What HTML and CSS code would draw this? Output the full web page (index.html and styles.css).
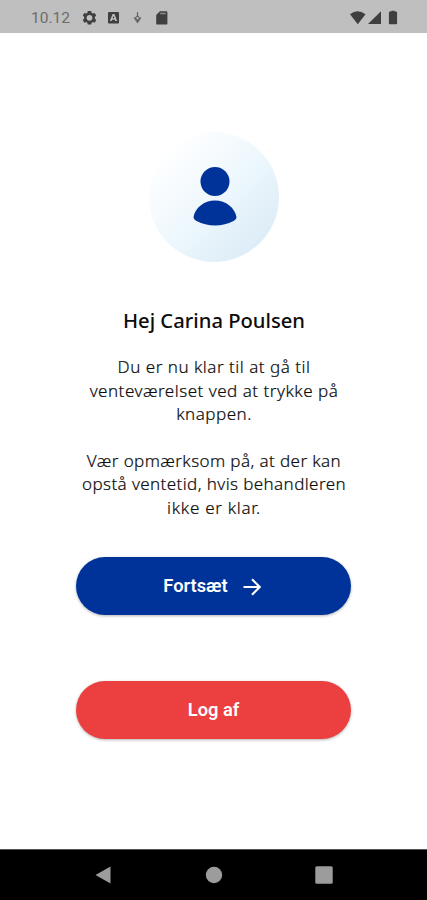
FILE: index.html
```html
<!DOCTYPE html>
<html lang="da">
<head>
<meta charset="utf-8">
<meta name="viewport" content="width=device-width">
<title>Venteværelse</title>
<link rel="stylesheet" href="styles.css">
</head>
<body>
<header class="status">
  <span class="clock">10.12</span>
  <svg class="status-left" width="82" height="18" viewBox="0 0 82 18">
    <path fill-rule="evenodd" d="M5.800 2h3.400l.5 1.900 1 .6 2-.6 1.500 2.700-1.400 1.400v1.600l1.400 1.400-1.500 2.700-2-.6-1 .6-.5 1.900H5.800l-.5-1.900-1-.6-2 .6L.8 11l1.400-1.400V8L.8 6.600l1.500-2.700 2 .6 1-.6zM7.500 5.900a2.900 2.900 0 1 0 0 5.800 2.900 2.900 0 0 0 0-5.800z"/>
    <path fill-rule="evenodd" d="M27 3h9a1 1 0 0 1 1 1v9.500a1 1 0 0 1-1 1h-9a1 1 0 0 1-1-1V4a1 1 0 0 1 1-1zm3.600 2-2.800 7h1.800l.5-1.300h2.800l.5 1.300h1.800l-2.800-7zm.9 1.700.9 2.500h-1.800z"/>
    <path class="thin" d="M55.500 3v4M52 8.500l3.500 5 3.500-5M55.500 6.500l2 2.500-2 2.500-2-2.500z"/>
    <path fill-rule="evenodd" d="M77.900 2.200h6.300a1.200 1.200 0 0 1 1.200 1.200v11a1.200 1.200 0 0 1-1.200 1.200h-8.800a1.200 1.200 0 0 1-1.200-1.200V6z"/>
    <path class="notch" d="M78.200 4.500h5.500"/>
  </svg>
  <svg class="status-right" width="50" height="18" viewBox="0 0 50 18">
    <path d="M1 5.200Q8.500-.6 16.500 5.200L8.800 15.200z"/>
    <path d="M32 2.300v12.800H19z"/>
    <path d="M42.300 2.500V1.700h3.400v.8h1.500a.9.900 0 0 1 .9.900v10.900a.9.900 0 0 1-.9.900h-6.400a.9.900 0 0 1-.9-.9V3.400a.9.900 0 0 1 .9-.9z"/>
  </svg>
</header>
<main class="screen">
  <div class="avatar">
    <svg width="44" height="60" viewBox="0 0 44 60">
      <circle cx="22" cy="14.500" r="14.500"/>
      <path d="M.5 50C2 41 11 33.500 22 33.500S42 41 43.500 50q0 2.500-2.500 3.700Q32 58.500 22 58.500T3 53.700Q.5 52.500.5 50z"/>
    </svg>
  </div>
  <h1 class="title">Hej Carina Poulsen</h1>
  <p class="text">Du er nu klar til at gå til<br>venteværelset ved at trykke på<br>knappen.</p>
  <p class="text tight">Vær opmærksom på, at der kan<br>opstå ventetid, hvis behandleren<br><span class="wide">ikke er klar.</span></p>
  <button class="button primary"><span>Fortsæt</span>
    <svg width="18" height="18" viewBox="0 0 18 18"><path d="M.5 9h16M9 1.300 16.700 9 9 16.700"/></svg>
  </button>
  <button class="button danger">Log af</button>
</main>
<nav class="nav">
  <svg width="18" height="18" viewBox="0 0 18 18"><path d="M15.500.5v17L.5 9z"/></svg>
  <svg width="18" height="18" viewBox="0 0 18 18"><circle cx="9" cy="9" r="8.200"/></svg>
  <svg width="18" height="18" viewBox="0 0 18 18"><rect x=".3" y=".3" width="17.400" height="17.400" rx="1.500"/></svg>
</nav>
</body>
</html>
```

FILE: styles.css
```css
* { box-sizing: border-box; }
body {
  margin: 0;
  height: 900px;
  display: flex;
  flex-direction: column;
  background: #fff;
  color: #0c0c0c;
  font-family: "Noto Sans", sans-serif;
  overflow: hidden;
}
.status {
  height: 33px;
  flex: none;
  display: flex;
  align-items: center;
  padding: 3px 28px 0 31px;
  background: #bfbfbf;
  color: #6c6c6c;
}
.clock {
  width: 51px;
  font: 15.5px/20px Roboto, sans-serif;
}
.status svg { fill: #3f3f3f; overflow: visible; }
.status .thin { fill: none; stroke: #666; stroke-width: 1.2; }
.status .notch { stroke: #8a8a8a; stroke-width: 1.6; }
.status-right { margin-left: auto; }
.screen {
  flex: 1;
  display: flex;
  flex-direction: column;
  align-items: center;
  padding: 99px 0 0 1px;
}
.avatar {
  width: 130px;
  height: 130px;
  border-radius: 50%;
  flex: none;
  display: flex;
  justify-content: center;
  padding: 35px 0 0 2px;
  background: linear-gradient(135deg, #fff 12%, #edf7fd 52%, #d6e8f4 100%);
}
.avatar svg { fill: #003399; }
.title {
  margin: 44px 0 21px;
  font-size: 20.2px;
  line-height: 28px;
  font-weight: 500;
  white-space: nowrap;
}
.text {
  margin: 0 0 23px;
  font-size: 17px;
  line-height: 23.6px;
  font-weight: 300;
  letter-spacing: .5px;
  text-align: center;
  white-space: nowrap;
  -webkit-text-stroke: .2px currentColor;
}
.tight { letter-spacing: .4px; }
.wide { letter-spacing: .7px; }
.button {
  width: 275px;
  height: 58px;
  flex: none;
  display: flex;
  align-items: center;
  justify-content: center;
  gap: 15px;
  padding: 0;
  margin-right: 1px;
  border: 0;
  border-radius: 29px;
  color: #fff;
  font: 600 18.3px/22px Roboto, sans-serif;
  box-shadow: 0 1px 3px rgba(0, 0, 0, .3);
}
.button svg { fill: none; stroke: #fff; stroke-width: 2.2; margin-top: 2px; }
.primary { background: #003399; margin-top: 14px; padding-right: 3px; }
.danger { background: #eb3f40; margin-top: 66px; }
.nav {
  height: 51px;
  flex: none;
  display: flex;
  justify-content: center;
  align-items: center;
  gap: 92px;
  background: #000;
  border-top: 1px solid #555;
}
.nav svg { fill: #9c9c9c; }
```
